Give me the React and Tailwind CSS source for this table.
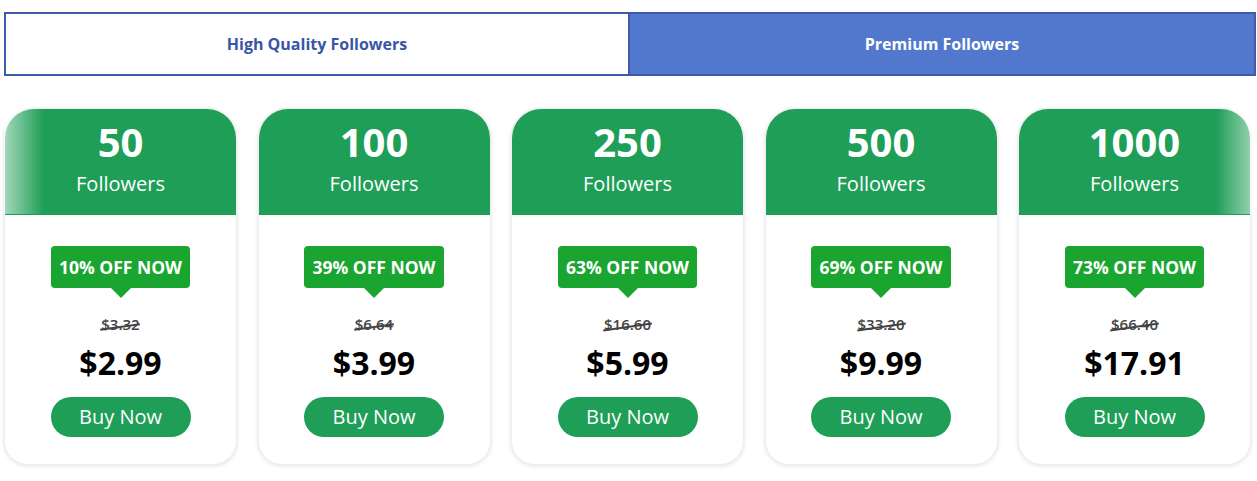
const PLANS = [
  { qty: '50', off: '10%', was: '$3.32', price: '$2.99' },
  { qty: '100', off: '39%', was: '$6.64', price: '$3.99' },
  { qty: '250', off: '63%', was: '$16.60', price: '$5.99' },
  { qty: '500', off: '69%', was: '$33.20', price: '$9.99' },
  { qty: '1000', off: '73%', was: '$66.40', price: '$17.91' },
];

function PlanCard({ plan }) {
  return (
    <div className="w-[233px] h-[357px] bg-white rounded-t-[30px] rounded-b-[24px] shadow-[0_1px_4px_rgba(0,0,0,0.12)] border border-[#eceff1] flex flex-col overflow-hidden">
      <div className="h-[106px] bg-[#1e9e57] text-white flex flex-col items-center">
        <div className="text-[40px] font-bold leading-none mt-[13px]">{plan.qty}</div>
        <div className="text-[20px] leading-none mt-[12px]">Followers</div>
      </div>
      <div className="flex flex-col items-center pt-[31px]">
        <div className="relative">
          <div className="h-[42px] px-[8px] bg-[#1aa530] rounded-[4px] text-white text-[17.5px] font-bold flex items-center">
            {plan.off} OFF NOW
          </div>
          <div className="mx-auto w-0 h-0 border-l-[10px] border-r-[10px] border-t-[10px] border-l-transparent border-r-transparent border-t-[#1aa530]" />
        </div>
        <div className="relative mt-[19px] text-[15px] font-semibold text-[#444] leading-none">
          {plan.was}
          <span className="absolute left-[-1px] right-[-1px] top-[9px] h-[1.5px] bg-[#444] -rotate-[8deg]" />
        </div>
        <div className="text-[32px] font-bold text-black leading-none mt-[15px]">{plan.price}</div>
        <button className="mt-[18px] w-[140px] h-[40px] rounded-full bg-[#1e9e57] text-white text-[20px]">
          Buy Now
        </button>
      </div>
    </div>
  );
}

export default function App() {
  return (
    <div className="w-[1257px] h-[481px] bg-white font-['Open_Sans',sans-serif] pt-[12px] px-[4px]">
      <div className="flex h-[64px] border-2 border-[#3f5aa8] mr-[-3px]">
        <button className="w-[622px] bg-white text-[#3b55a5] text-[16px] font-bold">High Quality Followers</button>
        <button className="flex-1 bg-[#5178cd] text-white text-[16px] font-bold border-l-2 border-[#3f5aa8]">Premium Followers</button>
      </div>
      <div className="relative mt-[32px] flex gap-[20.5px]">
        {PLANS.map(p => <PlanCard key={p.qty} plan={p} />)}
        <div className="absolute left-0 top-0 w-[40px] h-[106px] bg-gradient-to-r from-white/60 to-transparent" />
        <div className="absolute left-[1212px] top-0 w-[40px] h-[106px] bg-gradient-to-l from-white/60 to-transparent" />
      </div>
    </div>
  );
}
